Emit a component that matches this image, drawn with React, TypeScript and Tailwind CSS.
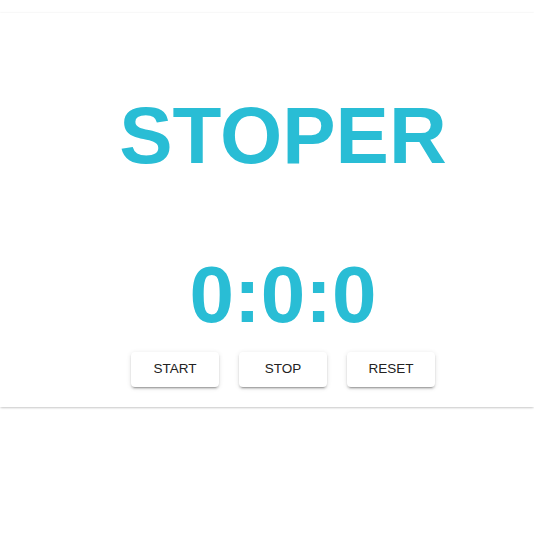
import React from "react";

export default function App() {
  const btn =
    "w-[88px] h-[35px] bg-white rounded-[4px] text-[13.5px] text-[#222] uppercase shadow-[0_3px_1px_-2px_rgba(0,0,0,0.2),0_2px_2px_0_rgba(0,0,0,0.14),0_1px_5px_0_rgba(0,0,0,0.12)]";
  return (
    <div className="w-[534px] h-[534px] bg-white" style={{ fontFamily: '"Liberation Sans", Arial, sans-serif' }}>
      <div className="mt-[13px] h-[394px] bg-white flex flex-col items-center pt-[77px] pl-[32px] shadow-[0_2px_2px_-1px_rgba(0,0,0,0.12),0_1px_2px_0_rgba(0,0,0,0.08),0_0_2px_0_rgba(0,0,0,0.08)]">
        <h1 className="text-[80px] leading-[92px] font-bold text-[#29bdd5]">STOPER</h1>
        <div className="mt-[67px] text-[80px] leading-[92px] font-bold text-[#29bdd5]">0:0:0</div>
        <div className="mt-[11px] flex gap-[20px]">
          <button className={btn}>Start</button>
          <button className={btn}>Stop</button>
          <button className={btn}>Reset</button>
        </div>
      </div>
    </div>
  );
}
